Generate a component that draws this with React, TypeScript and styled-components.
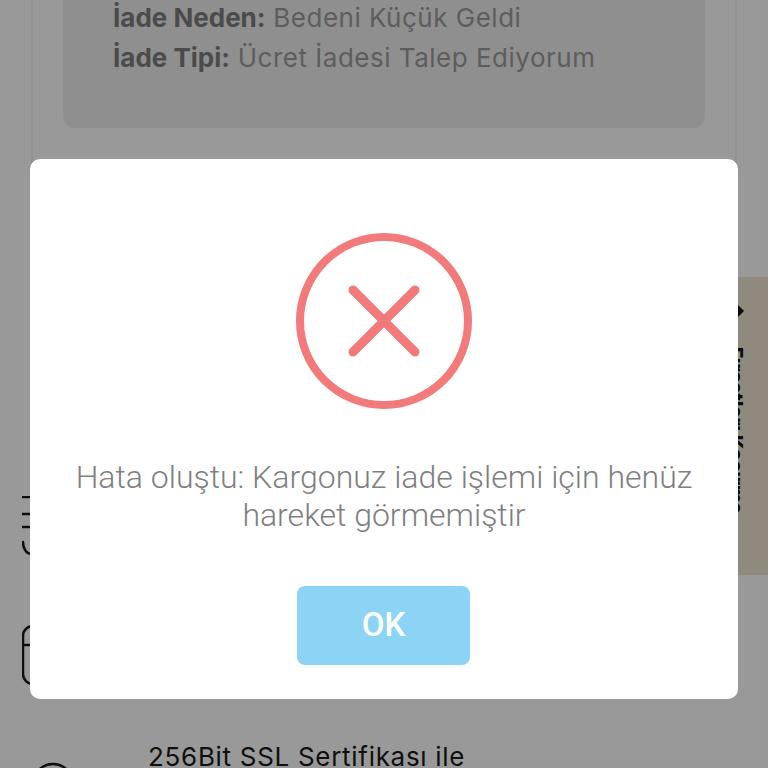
import styled, { createGlobalStyle } from "styled-components";

const GlobalStyle = createGlobalStyle`
   html, body {
      margin: 0;
      padding: 0;
      height: 768px;
      overflow: hidden;
      background: #fff;
   }
`;

const Page = styled.div`
   height: 768px;
   overflow: hidden;
   font-family: Inter, "Noto Sans", sans-serif;
`;

const ReturnCard = styled.section`
   margin: -40px 31px 0;
   height: 330px;
   padding: 0 30px;
   border: 2px solid #f4f4f4;
   box-sizing: border-box;
`;

const ReturnPanel = styled.div`
   height: 166px;
   padding: 36px 50px 0;
   box-sizing: border-box;
   background: #efefef;
   border-radius: 0 0 12px 12px;
`;

const InfoLine = styled.p`
   margin: 0;
   font-size: 26px;
   line-height: 40px;
   letter-spacing: 0.5px;
   color: #9c9c9c;
   white-space: nowrap;

   strong {
      font-weight: 700;
      letter-spacing: 0;
      color: #7e7e7e;
   }
`;

const FeatureList = styled.ul`
   list-style: none;
   margin: 0;
   padding: 206px 0 0 22px;
   display: flex;
   flex-direction: column;
   gap: 69px;
`;

const FeatureRow = styled.li`
   display: flex;
   gap: 66px;
   height: 60px;
`;

const FeatureIcon = styled.svg`
   width: 60px;
   height: 60px;
   flex: none;
   fill: none;
   stroke: #1a1a1a;
   stroke-width: 2.5;
   stroke-linecap: round;
`;

const FeatureText = styled.span`
   margin-top: -16px;
   font-size: 26px;
   line-height: 38px;
   letter-spacing: 0.7px;
   color: #1a1a1a;
   white-space: nowrap;
`;

const SideTab = styled.aside`
   position: fixed;
   top: 277px;
   right: 0;
   width: 60px;
   height: 298px;
   box-sizing: border-box;
   padding-top: 26px;
   display: flex;
   flex-direction: column;
   align-items: flex-start;
   gap: 28px;
   background: #eee5d2;
`;

const SideTabArrow = styled.svg`
   width: 12px;
   height: 16px;
   margin-left: 26px;
   fill: #111;
`;

const SideTabText = styled.span`
   writing-mode: vertical-rl;
   margin-left: 18px;
   font-size: 19px;
   font-weight: 800;
   line-height: 18px;
   color: #111;
   white-space: nowrap;
`;

const Overlay = styled.div`
   position: fixed;
   inset: 0;
   padding: 159px 30px 0;
   background: rgba(0, 0, 0, 0.4);
`;

const Modal = styled.div`
   height: 540px;
   padding-top: 74px;
   box-sizing: border-box;
   display: flex;
   flex-direction: column;
   align-items: center;
   background: #fff;
   border-radius: 10px;
`;

const ErrorIcon = styled.svg`
   width: 176px;
   height: 176px;
   flex: none;
   fill: none;
   stroke: #f27a7a;
`;

const Message = styled.p`
   width: 640px;
   margin: 49px 0 0;
   font-family: Roboto, sans-serif;
   font-size: 32px;
   font-weight: 300;
   line-height: 38px;
   text-align: center;
   color: #7f7f7f;
`;

const ConfirmButton = styled.button`
   width: 173px;
   height: 79px;
   margin: 52px 1px 0 0;
   padding: 0 0 2px;
   border: none;
   border-radius: 8px;
   background: #8cd4f5;
   font-family: Roboto, sans-serif;
   font-size: 33px;
   font-weight: 500;
   color: #fff;
`;

export default function App() {
   return (
      <>
         <GlobalStyle />
         <Page>
            <ReturnCard>
               <ReturnPanel>
                  <InfoLine>
                     <strong>İade Neden:</strong> Bedeni Küçük Geldi
                  </InfoLine>
                  <InfoLine>
                     <strong>İade Tipi:</strong> Ücret İadesi Talep Ediyorum
                  </InfoLine>
               </ReturnPanel>
            </ReturnCard>

            <FeatureList>
               <FeatureRow>
                  <FeatureIcon viewBox="0 0 60 60">
                     <path d="M0 1H40M0 18H40M0 31H40M1 46C1 52 4 58 10 58" />
                  </FeatureIcon>
                  <FeatureText>Güvenli Alışveriş</FeatureText>
               </FeatureRow>
               <FeatureRow>
                  <FeatureIcon viewBox="0 0 60 60">
                     <rect x="1" y="1" width="50" height="58" rx="10" />
                     <path d="M1 20H40" />
                  </FeatureIcon>
                  <FeatureText>Kolay İade</FeatureText>
               </FeatureRow>
               <FeatureRow>
                  <FeatureIcon viewBox="0 0 60 60">
                     <circle cx="31" cy="30" r="20" />
                  </FeatureIcon>
                  <FeatureText>256Bit SSL Sertifikası ile</FeatureText>
               </FeatureRow>
            </FeatureList>

            <SideTab>
               <SideTabArrow viewBox="0 0 12 16">
                  <path d="M2 0L10 8L2 16Z" />
               </SideTabArrow>
               <SideTabText>Fırsatları Kaçırma</SideTabText>
            </SideTab>
         </Page>

         <Overlay>
            <Modal>
               <ErrorIcon viewBox="0 0 176 176">
                  <circle cx="88" cy="88" r="84" strokeWidth="8" />
                  <path d="M57 57L119 119M119 57L57 119" strokeWidth="9" strokeLinecap="round" />
               </ErrorIcon>
               <Message>Hata oluştu: Kargonuz iade işlemi için henüz hareket görmemiştir</Message>
               <ConfirmButton>OK</ConfirmButton>
            </Modal>
         </Overlay>
      </>
   );
}
